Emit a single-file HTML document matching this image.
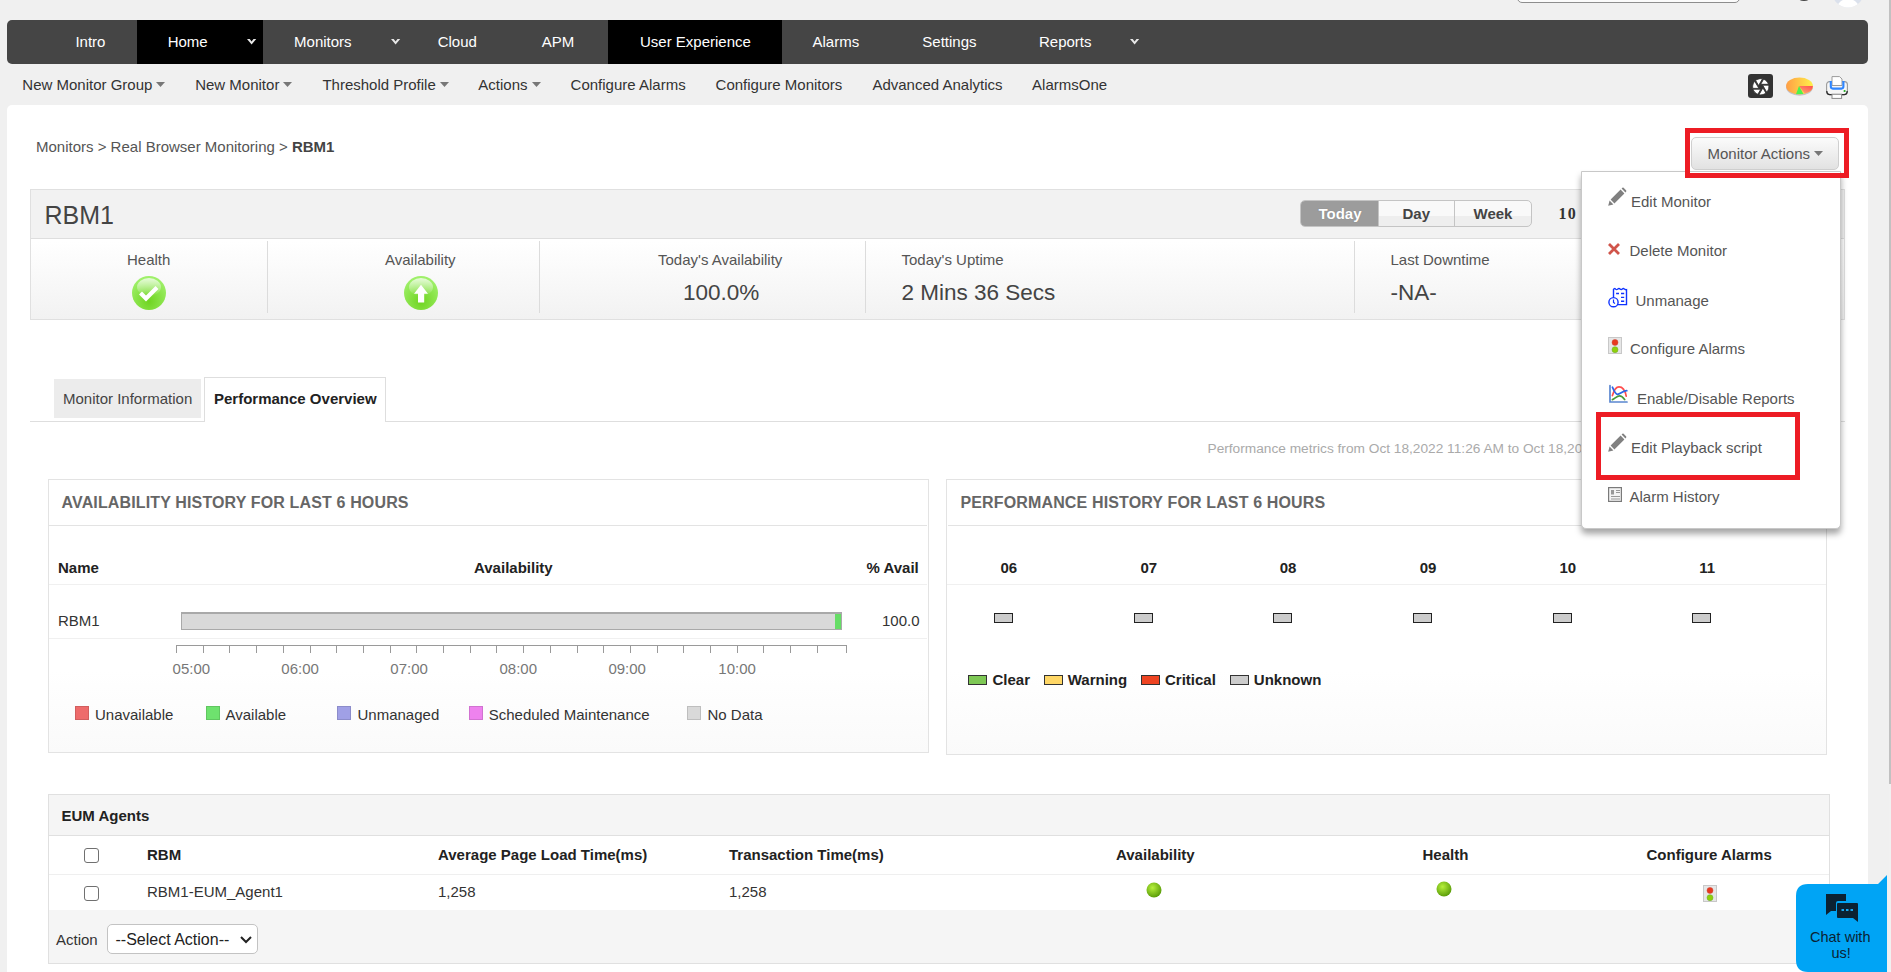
<!DOCTYPE html>
<html><head><meta charset="utf-8"><title>RBM1</title><style>
*{margin:0;padding:0;box-sizing:border-box}
html,body{width:1891px;height:972px;overflow:hidden}
body{background:#f0f0f0;font-family:"Liberation Sans", sans-serif;position:relative}
.a{position:absolute}
.t{position:absolute;white-space:nowrap;line-height:1;font-family:"Liberation Sans", sans-serif}
svg{position:absolute;overflow:visible}
</style></head><body>
<div class="a" style="left:1517px;top:-10px;width:223px;height:13px;border:1px solid #8d8d8d;border-radius:0 0 5px 5px;background:#fbfbfb"></div>
<div class="a" style="left:1799px;top:-5px;width:10px;height:6.2px;background:#4a4a4a;border-radius:45%;filter:blur(0.5px)"></div>
<svg style="left:1830px;top:-30px" width="36" height="40" viewBox="0 0 36 40"><defs><clipPath id="avc"><circle cx="18" cy="21.4" r="16"/></clipPath></defs><circle cx="18" cy="21.4" r="16" fill="#dbe1ec"/><g clip-path="url(#avc)"><ellipse cx="18" cy="38" rx="11" ry="9" fill="#fff"/><circle cx="18" cy="20" r="6" fill="#fff"/></g></svg>
<div class="a" style="left:7px;top:20px;width:1861px;height:44px;background:#454545;border-radius:5px"></div>
<div class="a" style="left:137px;top:20px;width:126px;height:44px;background:#000"></div>
<div class="a" style="left:608px;top:20px;width:174px;height:44px;background:#000"></div>
<div class="t" style="left:75.4px;top:34.30px;font-size:15px;font-weight:400;color:#fff;">Intro</div>
<div class="t" style="left:167.7px;top:34.30px;font-size:15px;font-weight:400;color:#fff;">Home</div>
<div class="t" style="left:294.1px;top:34.30px;font-size:15px;font-weight:400;color:#fff;">Monitors</div>
<div class="t" style="left:437.7px;top:34.30px;font-size:15px;font-weight:400;color:#fff;">Cloud</div>
<div class="t" style="left:541.7px;top:34.30px;font-size:15px;font-weight:400;color:#fff;">APM</div>
<div class="t" style="left:640.0px;top:34.30px;font-size:15px;font-weight:400;color:#fff;">User Experience</div>
<div class="t" style="left:812.5px;top:34.30px;font-size:15px;font-weight:400;color:#fff;">Alarms</div>
<div class="t" style="left:922.3px;top:34.30px;font-size:15px;font-weight:400;color:#fff;">Settings</div>
<div class="t" style="left:1039.0px;top:34.30px;font-size:15px;font-weight:400;color:#fff;">Reports</div>
<svg style="left:246.9px;top:38.7px" width="10" height="6" viewBox="0 0 10 6"><path d="M0 0 L2.7 0 L4.6 2.5 L6.5 0 L9.2 0 L4.6 5.6 Z" fill="#e8e8e8"/></svg>
<svg style="left:390.7px;top:38.7px" width="10" height="6" viewBox="0 0 10 6"><path d="M0 0 L2.7 0 L4.6 2.5 L6.5 0 L9.2 0 L4.6 5.6 Z" fill="#e8e8e8"/></svg>
<svg style="left:1130px;top:38.7px" width="10" height="6" viewBox="0 0 10 6"><path d="M0 0 L2.7 0 L4.6 2.5 L6.5 0 L9.2 0 L4.6 5.6 Z" fill="#e8e8e8"/></svg>
<div class="t" style="left:22.3px;top:77.10px;font-size:15px;font-weight:400;color:#333;">New Monitor Group</div>
<div class="t" style="left:195.2px;top:77.10px;font-size:15px;font-weight:400;color:#333;">New Monitor</div>
<div class="t" style="left:322.4px;top:77.10px;font-size:15px;font-weight:400;color:#333;">Threshold Profile</div>
<div class="t" style="left:478.3px;top:77.10px;font-size:15px;font-weight:400;color:#333;">Actions</div>
<div class="t" style="left:570.6px;top:77.10px;font-size:15px;font-weight:400;color:#333;">Configure Alarms</div>
<div class="t" style="left:715.6px;top:77.10px;font-size:15px;font-weight:400;color:#333;">Configure Monitors</div>
<div class="t" style="left:872.4px;top:77.10px;font-size:15px;font-weight:400;color:#333;">Advanced Analytics</div>
<div class="t" style="left:1032.1px;top:77.10px;font-size:15px;font-weight:400;color:#333;">AlarmsOne</div>
<svg style="left:156px;top:82px" width="9" height="5" viewBox="0 0 9 5"><path d="M0 0 L9 0 L4.5 5 Z" fill="#777"/></svg>
<svg style="left:283px;top:82px" width="9" height="5" viewBox="0 0 9 5"><path d="M0 0 L9 0 L4.5 5 Z" fill="#777"/></svg>
<svg style="left:439.6px;top:82px" width="9" height="5" viewBox="0 0 9 5"><path d="M0 0 L9 0 L4.5 5 Z" fill="#777"/></svg>
<svg style="left:531.6px;top:82px" width="9" height="5" viewBox="0 0 9 5"><path d="M0 0 L9 0 L4.5 5 Z" fill="#777"/></svg>
<div class="a" style="left:1748.4px;top:74.2px;width:24.4px;height:24.3px;background:#333;border-radius:3px"></div>
<svg style="left:1750.8px;top:77.2px" width="19.5" height="19.5" viewBox="0 0 24 24"><path fill="#fff" stroke="#333" stroke-width="1.1" d="M9.4 10.5l4.77-8.26C13.47 2.09 12.75 2 12 2c-2.4 0-4.6.85-6.32 2.25l3.66 6.35.06-.1zM21.54 9c-.92-2.92-3.15-5.26-6-6.34L11.88 9h9.66zm.26 1h-7.49l.29.5 4.76 8.25C21 16.97 22 14.61 22 12c0-.69-.07-1.35-.2-2zM8.54 12l-3.9-6.75C3.01 7.03 2 9.39 2 12c0 .69.07 1.35.2 2h7.49l-1.15-2zm-6.08 3c.92 2.92 3.15 5.26 6 6.34L12.12 15H2.46zm11.27 0l-3.9 6.76c.7.15 1.42.24 2.17.24 2.4 0 4.6-.85 6.32-2.25l-3.66-6.35-.93 1.6z"/></svg>
<svg style="left:1786px;top:77px" width="28" height="20" viewBox="0 0 28 20">
<defs><linearGradient id="pg" x1="0" y1="0" x2="1" y2="0"><stop offset="0" stop-color="#ff9e45"/><stop offset="1" stop-color="#fff04a"/></linearGradient>
<linearGradient id="pr" x1="1" y1="0" x2="0.3" y2="1"><stop offset="0" stop-color="#ff4f4f"/><stop offset="1" stop-color="#ffa070"/></linearGradient></defs>
<ellipse cx="13.5" cy="10.3" rx="13.4" ry="8.4" fill="#c4c0c8"/>
<ellipse cx="13.5" cy="9" rx="13.4" ry="8.4" fill="url(#pg)"/>
<path d="M13 9 L26.9 9 A13.4 8.4 0 0 1 18.8 16.6 Z" fill="url(#pr)"/>
<path d="M13 9 L10 17.3 L17.4 17 Z" fill="#4cf24c"/>
</svg>
<svg style="left:1826px;top:76px" width="23" height="23" viewBox="0 0 23 23">
<rect x="0.6" y="5.6" width="20.8" height="13" rx="3" fill="#f6f6f6" stroke="#9a9a9a" stroke-width="1.1"/>
<path d="M0.8 15 Q0.8 18.6 4 18.6 H18 Q21.2 18.6 21.2 15" stroke="#2a2a2a" stroke-width="1.3" fill="none"/>
<path d="M6 0.6 H13.5 L16 3 V9.5 H6 Z" fill="#fff" stroke="#9a9a9a" stroke-width="1"/>
<path d="M4.8 5 V10.6 Q4.8 12.6 6.8 12.6 H15.4 Q17.4 12.6 17.4 10.6 V5" stroke="#2f86ff" stroke-width="2.1" fill="none"/>
<rect x="6" y="18.2" width="9.6" height="4.2" fill="#fff" stroke="#8a8a8a" stroke-width="1"/>
<circle cx="18.6" cy="15" r="1.1" fill="#22aa22"/>
</svg>
<div class="a" style="left:7px;top:105px;width:1861px;height:900px;background:#fff;border-radius:5px"></div>
<div class="t" style="left:36.0px;top:139.10px;font-size:15px;font-weight:400;color:#555;">Monitors &gt; Real Browser Monitoring &gt; <b style="color:#444">RBM1</b></div>
<div class="a" style="left:30px;top:189px;width:1815px;height:131px;border:1px solid #e0e0e0;background:linear-gradient(#fff 0,#fff 40%,#f2f2f2 100%)"></div>
<div class="a" style="left:31px;top:190px;width:1813px;height:49px;background:#f2f2f2;border-bottom:1px solid #dedede"></div>
<div class="t" style="left:44.5px;top:202.64px;font-size:25px;font-weight:400;color:#444;">RBM1</div>
<div class="a" style="left:1300px;top:200px;width:232px;height:27px;border:1px solid #c4c4c4;border-radius:5px;overflow:hidden;background:linear-gradient(#f9f9f9 0,#f9f9f9 60%,#eeeeee 60%,#eeeeee 100%)">
<div class="a" style="left:0;top:0;width:77px;height:25px;background:#9c9c9c"></div>
<div class="a" style="left:77px;top:0;width:1px;height:25px;background:#c4c4c4"></div>
<div class="a" style="left:153px;top:0;width:1px;height:25px;background:#c4c4c4"></div>
</div>
<div class="t" style="left:1318.5px;top:206.20px;font-size:15px;font-weight:700;color:#fff;text-shadow:0 0 1px #777">Today</div>
<div class="t" style="left:1402.5px;top:206.20px;font-size:15px;font-weight:700;color:#444;">Day</div>
<div class="t" style="left:1473.5px;top:206.20px;font-size:15px;font-weight:700;color:#444;">Week</div>
<div class="t" style="left:1558.5px;top:205.66px;font-size:16px;font-weight:700;color:#333;font-family:'Liberation Serif', serif;letter-spacing:1.3px">10</div>
<div class="a" style="left:267px;top:241px;width:1px;height:72px;background:#dcdcdc"></div>
<div class="a" style="left:539px;top:241px;width:1px;height:72px;background:#dcdcdc"></div>
<div class="a" style="left:865px;top:241px;width:1px;height:72px;background:#dcdcdc"></div>
<div class="a" style="left:1354px;top:241px;width:1px;height:72px;background:#dcdcdc"></div>
<div class="t" style="left:127.0px;top:251.90px;font-size:15px;font-weight:400;color:#555;">Health</div>
<div class="t" style="left:385.0px;top:251.90px;font-size:15px;font-weight:400;color:#555;">Availability</div>
<div class="t" style="left:658.0px;top:251.90px;font-size:15px;font-weight:400;color:#555;">Today's Availability</div>
<div class="t" style="left:901.5px;top:251.90px;font-size:15px;font-weight:400;color:#555;">Today's Uptime</div>
<div class="t" style="left:1390.5px;top:251.90px;font-size:15px;font-weight:400;color:#555;">Last Downtime</div>
<div class="t" style="left:683.0px;top:282.05px;font-size:22.5px;font-weight:400;color:#444;">100.0%</div>
<div class="t" style="left:901.5px;top:282.05px;font-size:22.5px;font-weight:400;color:#444;">2 Mins 36 Secs</div>
<div class="t" style="left:1390.5px;top:282.05px;font-size:22.5px;font-weight:400;color:#444;">-NA-</div>
<svg style="left:132px;top:276px" width="34" height="34" viewBox="0 0 34 34">
<defs><radialGradient id="bg149" cx="0.5" cy="0.75" r="0.7"><stop offset="0" stop-color="#6fd421"/><stop offset="1" stop-color="#9ff06a"/></radialGradient>
<linearGradient id="hl149" x1="0" y1="0" x2="0" y2="1"><stop offset="0" stop-color="#fff" stop-opacity="0.75"/><stop offset="1" stop-color="#fff" stop-opacity="0"/></linearGradient></defs>
<circle cx="17" cy="17" r="17" fill="url(#bg149)"/>
<ellipse cx="17" cy="11" rx="12" ry="9" fill="url(#hl149)"/>
<path d="M8.5 17 L14 22.5 L25 11.5" stroke="#fff" stroke-width="4.2" fill="none"/></svg>
<svg style="left:404px;top:276px" width="34" height="34" viewBox="0 0 34 34">
<defs><radialGradient id="bg421" cx="0.5" cy="0.75" r="0.7"><stop offset="0" stop-color="#6fd421"/><stop offset="1" stop-color="#9ff06a"/></radialGradient>
<linearGradient id="hl421" x1="0" y1="0" x2="0" y2="1"><stop offset="0" stop-color="#fff" stop-opacity="0.75"/><stop offset="1" stop-color="#fff" stop-opacity="0"/></linearGradient></defs>
<circle cx="17" cy="17" r="17" fill="url(#bg421)"/>
<ellipse cx="17" cy="11" rx="12" ry="9" fill="url(#hl421)"/>
<path d="M17 8.8 L24 17.8 L20.2 17.8 L20.2 26.4 L14 26.4 L14 17.8 L10 17.8 Z" fill="#fff"/></svg>
<div class="a" style="left:30px;top:421px;width:1815px;height:1px;background:#dedede"></div>
<div class="a" style="left:54px;top:379px;width:147px;height:39px;background:#ececec"></div>
<div class="t" style="left:63.0px;top:391.40px;font-size:15px;font-weight:400;color:#444;">Monitor Information</div>
<div class="a" style="left:204px;top:377px;width:182px;height:45px;background:#fff;border:1px solid #dedede;border-bottom:none"></div>
<div class="t" style="left:214.0px;top:391.40px;font-size:15px;font-weight:700;color:#222;">Performance Overview</div>
<div class="t" style="left:1207.5px;top:442.20px;font-size:13.7px;font-weight:400;color:#aaa;">Performance metrics from Oct 18,2022 11:26 AM to Oct 18,2022 11:29 AM</div>
<div class="a" style="left:48px;top:479px;width:881px;height:274px;border:1px solid #e3e3e3;background:linear-gradient(#fff 0,#fff 70%,#fafafa 100%)"></div>
<div class="a" style="left:49px;top:525px;width:878px;height:1px;background:#e3e3e3"></div>
<div class="t" style="left:61.5px;top:495.36px;font-size:16px;font-weight:700;color:#666;letter-spacing:0.14px">AVAILABILITY HISTORY FOR LAST 6 HOURS</div>
<div class="t" style="left:58.0px;top:560.10px;font-size:15px;font-weight:700;color:#222;">Name</div>
<div class="t" style="left:474.0px;top:560.10px;font-size:15px;font-weight:700;color:#222;">Availability</div>
<div class="t" style="left:866.5px;top:560.10px;font-size:15px;font-weight:700;color:#222;">% Avail</div>
<div class="a" style="left:49px;top:584px;width:878px;height:1px;background:#f0f0f0"></div>
<div class="t" style="left:58.0px;top:612.90px;font-size:15px;font-weight:400;color:#333;">RBM1</div>
<div class="a" style="left:181px;top:612px;width:661px;height:18px;background:#d9d9d9;border:1px solid #a9a9a9;border-top-width:2px"></div>
<div class="a" style="left:835px;top:614px;width:6px;height:15px;background:#66dd66"></div>
<div class="t" style="left:882.0px;top:613.10px;font-size:15px;font-weight:400;color:#333;">100.0</div>
<div class="a" style="left:49px;top:638px;width:878px;height:1px;background:#f0f0f0"></div>
<svg style="left:0;top:0" width="1000" height="700"><g stroke="#9a9a9a" stroke-width="1" shape-rendering="crispEdges"><line x1="176" y1="645.5" x2="847" y2="645.5"/><line x1="176.5" y1="645" x2="176.5" y2="653"/><line x1="203.2" y1="645" x2="203.2" y2="653"/><line x1="229.9" y1="645" x2="229.9" y2="653"/><line x1="256.6" y1="645" x2="256.6" y2="653"/><line x1="283.3" y1="645" x2="283.3" y2="653"/><line x1="310.0" y1="645" x2="310.0" y2="653"/><line x1="336.7" y1="645" x2="336.7" y2="653"/><line x1="363.4" y1="645" x2="363.4" y2="653"/><line x1="390.1" y1="645" x2="390.1" y2="653"/><line x1="416.8" y1="645" x2="416.8" y2="653"/><line x1="443.5" y1="645" x2="443.5" y2="653"/><line x1="470.2" y1="645" x2="470.2" y2="653"/><line x1="496.9" y1="645" x2="496.9" y2="653"/><line x1="523.6" y1="645" x2="523.6" y2="653"/><line x1="550.3" y1="645" x2="550.3" y2="653"/><line x1="577.0" y1="645" x2="577.0" y2="653"/><line x1="603.7" y1="645" x2="603.7" y2="653"/><line x1="630.4" y1="645" x2="630.4" y2="653"/><line x1="657.1" y1="645" x2="657.1" y2="653"/><line x1="683.8" y1="645" x2="683.8" y2="653"/><line x1="710.5" y1="645" x2="710.5" y2="653"/><line x1="737.2" y1="645" x2="737.2" y2="653"/><line x1="763.9" y1="645" x2="763.9" y2="653"/><line x1="790.6" y1="645" x2="790.6" y2="653"/><line x1="817.3" y1="645" x2="817.3" y2="653"/><line x1="846.5" y1="645" x2="846.5" y2="653"/></g></svg>
<div class="t" style="left:172.6px;top:661.30px;font-size:15px;font-weight:400;color:#777;">05:00</div>
<div class="t" style="left:281.3px;top:661.30px;font-size:15px;font-weight:400;color:#777;">06:00</div>
<div class="t" style="left:390.3px;top:661.30px;font-size:15px;font-weight:400;color:#777;">07:00</div>
<div class="t" style="left:499.5px;top:661.30px;font-size:15px;font-weight:400;color:#777;">08:00</div>
<div class="t" style="left:608.4px;top:661.30px;font-size:15px;font-weight:400;color:#777;">09:00</div>
<div class="t" style="left:718.3px;top:661.30px;font-size:15px;font-weight:400;color:#777;">10:00</div>
<div class="a" style="left:75px;top:706px;width:14px;height:14px;background:#ee6b6b;border:1px solid rgba(0,0,0,0.12)"></div>
<div class="t" style="left:95.0px;top:707.30px;font-size:15px;font-weight:400;color:#333;">Unavailable</div>
<div class="a" style="left:206px;top:706px;width:14px;height:14px;background:#6ee26e;border:1px solid rgba(0,0,0,0.12)"></div>
<div class="t" style="left:225.5px;top:707.30px;font-size:15px;font-weight:400;color:#333;">Available</div>
<div class="a" style="left:337px;top:706px;width:14px;height:14px;background:#a0a0e6;border:1px solid rgba(0,0,0,0.12)"></div>
<div class="t" style="left:357.5px;top:707.30px;font-size:15px;font-weight:400;color:#333;">Unmanaged</div>
<div class="a" style="left:469px;top:706px;width:14px;height:14px;background:#ee82ee;border:1px solid rgba(0,0,0,0.12)"></div>
<div class="t" style="left:488.7px;top:707.30px;font-size:15px;font-weight:400;color:#333;">Scheduled Maintenance</div>
<div class="a" style="left:687px;top:706px;width:14px;height:14px;background:#d9d9d9;border:1px solid rgba(0,0,0,0.12)"></div>
<div class="t" style="left:707.5px;top:707.30px;font-size:15px;font-weight:400;color:#333;">No Data</div>
<div class="a" style="left:946px;top:479px;width:881px;height:276px;border:1px solid #e3e3e3;background:linear-gradient(#fff 0,#fff 70%,#fafafa 100%)"></div>
<div class="a" style="left:948px;top:525px;width:876px;height:1px;background:#e3e3e3"></div>
<div class="t" style="left:960.5px;top:495.36px;font-size:16px;font-weight:700;color:#666;letter-spacing:0.14px">PERFORMANCE HISTORY FOR LAST 6 HOURS</div>
<div class="t" style="left:1000.5px;top:560.20px;font-size:15px;font-weight:700;color:#222;">06</div>
<div class="a" style="left:994px;top:613px;width:19px;height:10px;background:#cccccc;border:1px solid #222"></div>
<div class="t" style="left:1140.4px;top:560.20px;font-size:15px;font-weight:700;color:#222;">07</div>
<div class="a" style="left:1134px;top:613px;width:19px;height:10px;background:#cccccc;border:1px solid #222"></div>
<div class="t" style="left:1279.7px;top:560.20px;font-size:15px;font-weight:700;color:#222;">08</div>
<div class="a" style="left:1273px;top:613px;width:19px;height:10px;background:#cccccc;border:1px solid #222"></div>
<div class="t" style="left:1419.7px;top:560.20px;font-size:15px;font-weight:700;color:#222;">09</div>
<div class="a" style="left:1413px;top:613px;width:19px;height:10px;background:#cccccc;border:1px solid #222"></div>
<div class="t" style="left:1559.4px;top:560.20px;font-size:15px;font-weight:700;color:#222;">10</div>
<div class="a" style="left:1553px;top:613px;width:19px;height:10px;background:#cccccc;border:1px solid #222"></div>
<div class="t" style="left:1699.2px;top:560.20px;font-size:15px;font-weight:700;color:#222;">11</div>
<div class="a" style="left:1692px;top:613px;width:19px;height:10px;background:#cccccc;border:1px solid #222"></div>
<div class="a" style="left:947px;top:584px;width:879px;height:1px;background:#f0f0f0"></div>
<div class="a" style="left:968px;top:675px;width:19px;height:10px;background:#7ec855;border:1px solid #333"></div>
<div class="t" style="left:992.5px;top:672.30px;font-size:15px;font-weight:700;color:#222;">Clear</div>
<div class="a" style="left:1044px;top:675px;width:19px;height:10px;background:#ffd766;border:1px solid #333"></div>
<div class="t" style="left:1067.7px;top:672.30px;font-size:15px;font-weight:700;color:#222;">Warning</div>
<div class="a" style="left:1141px;top:675px;width:19px;height:10px;background:#ee4422;border:1px solid #333"></div>
<div class="t" style="left:1165.0px;top:672.30px;font-size:15px;font-weight:700;color:#222;">Critical</div>
<div class="a" style="left:1230px;top:675px;width:19px;height:10px;background:#cccccc;border:1px solid #333"></div>
<div class="t" style="left:1253.8px;top:672.30px;font-size:15px;font-weight:700;color:#222;">Unknown</div>
<div class="a" style="left:48px;top:794px;width:1782px;height:170px;border:1px solid #e0e0e0;background:#f5f5f5"></div>
<div class="a" style="left:49px;top:835px;width:1780px;height:1px;background:#e0e0e0"></div>
<div class="a" style="left:49px;top:836px;width:1780px;height:74px;background:#fff"></div>
<div class="a" style="left:49px;top:874px;width:1780px;height:1px;background:#efefef"></div>
<div class="t" style="left:61.5px;top:808.30px;font-size:15px;font-weight:700;color:#222;">EUM Agents</div>
<div class="a" style="left:84px;top:848px;width:15px;height:15px;border:1.5px solid #707070;border-radius:3px;background:#fff"></div>
<div class="a" style="left:84px;top:886px;width:15px;height:15px;border:1.5px solid #707070;border-radius:3px;background:#fff"></div>
<div class="t" style="left:147.0px;top:846.90px;font-size:15px;font-weight:700;color:#222;">RBM</div>
<div class="t" style="left:438.0px;top:846.90px;font-size:15px;font-weight:700;color:#222;">Average Page Load Time(ms)</div>
<div class="t" style="left:729.0px;top:846.90px;font-size:15px;font-weight:700;color:#222;">Transaction Time(ms)</div>
<div class="t" style="left:1116.0px;top:846.90px;font-size:15px;font-weight:700;color:#222;">Availability</div>
<div class="t" style="left:1422.5px;top:846.90px;font-size:15px;font-weight:700;color:#222;">Health</div>
<div class="t" style="left:1646.5px;top:846.90px;font-size:15px;font-weight:700;color:#222;">Configure Alarms</div>
<div class="t" style="left:147.0px;top:884.10px;font-size:15px;font-weight:400;color:#333;">RBM1-EUM_Agent1</div>
<div class="t" style="left:438.0px;top:884.10px;font-size:15px;font-weight:400;color:#333;">1,258</div>
<div class="t" style="left:729.0px;top:884.10px;font-size:15px;font-weight:400;color:#333;">1,258</div>
<svg style="left:1145.5px;top:881.5px" width="16" height="16" viewBox="0 0 16 16"><defs><radialGradient id="d1153.5" cx="0.4" cy="0.35" r="0.65"><stop offset="0" stop-color="#b6f03c"/><stop offset="1" stop-color="#5c9e0a"/></radialGradient></defs><circle cx="8" cy="8" r="7.5" fill="url(#d1153.5)"/></svg>
<svg style="left:1435.8px;top:881.3px" width="16" height="16" viewBox="0 0 16 16"><defs><radialGradient id="d1443.8" cx="0.4" cy="0.35" r="0.65"><stop offset="0" stop-color="#b6f03c"/><stop offset="1" stop-color="#5c9e0a"/></radialGradient></defs><circle cx="8" cy="8" r="7.5" fill="url(#d1443.8)"/></svg>
<svg style="left:1703px;top:885px" width="14" height="17" viewBox="0 0 14 17"><rect x="0.5" y="0.5" width="13" height="16" fill="#e6e6e6" stroke="#c8c8c8"/><circle cx="7" cy="5.4" r="3" fill="#e8381f" stroke="#c84a3a" stroke-width="0.5"/><circle cx="7" cy="12.7" r="3" fill="#8fd00a" stroke="#6aa82a" stroke-width="0.5"/></svg>
<div class="t" style="left:56.0px;top:932.10px;font-size:15px;font-weight:400;color:#333;">Action</div>
<div class="a" style="left:107px;top:924px;width:151px;height:30px;border:1px solid #c3c3c3;border-radius:5px;background:#fff"></div>
<div class="t" style="left:115.5px;top:931.96px;font-size:16px;font-weight:400;color:#222;">--Select Action--</div>
<svg style="left:240px;top:936px" width="12" height="8" viewBox="0 0 12 8"><path d="M1 1 L6 6 L11 1" stroke="#222" stroke-width="2" fill="none"/></svg>
<div class="a" style="left:1691px;top:137px;width:148px;height:33px;border:1px solid #cfcfcf;border-radius:5px;background:linear-gradient(#fbfbfb,#e2e2e2)"></div>
<div class="t" style="left:1707.5px;top:145.80px;font-size:15px;font-weight:400;color:#555;">Monitor Actions</div>
<svg style="left:1814px;top:151px" width="9" height="5" viewBox="0 0 9 5"><path d="M0 0 L9 0 L4.5 5 Z" fill="#777"/></svg>
<div class="a" style="left:1581px;top:171px;width:260px;height:358px;background:#fff;border:1px solid #c8c8c8;border-radius:0 0 5px 5px;box-shadow:0 5px 6px rgba(0,0,0,0.35)"></div>
<div class="a" style="left:1685px;top:128px;width:164px;height:50px;border:5px solid #ed1c24"></div>
<svg style="left:1608px;top:188px" width="18" height="18" viewBox="0 0 18 18"><g fill="#808080"><path d="M0.2 17.8 L1.6 12.6 L5.4 16.4 Z"/><path d="M2.6 11.6 L12.6 1.6 L16.4 5.4 L6.4 15.4 Z"/><path d="M13.6 0.6 L14.4 -0.2 Q15 -0.6 15.6 -0.2 L18.2 2.4 Q18.6 3 18.2 3.6 L17.4 4.4 Z"/></g></svg>
<div class="t" style="left:1631.0px;top:193.50px;font-size:15px;font-weight:400;color:#555;">Edit Monitor</div>
<svg style="left:1608px;top:243px" width="12" height="12" viewBox="0 0 12 12"><path d="M1 1 L11 11 M11 1 L1 11" stroke="#d0544a" stroke-width="2.8"/></svg>
<div class="t" style="left:1629.5px;top:243.20px;font-size:15px;font-weight:400;color:#555;">Delete Monitor</div>
<svg style="left:1608px;top:287px" width="20" height="21" viewBox="0 0 20 21"><g stroke="#0f33ff" stroke-width="1.4" fill="none">
<path d="M5.5 17.6 V2.4 Q6.6 0.9 7.6 2.1 Q8.6 3.2 9.8 2.1 Q11 0.9 12.1 2.1 Q13.2 3.2 14.3 2.1 Q15.3 0.9 16.3 2.1 Q17.3 3 18.5 2.6 V17.6 Z" fill="#fff"/>
<path d="M8.1 6.5 h2.9 M13 6.5 h3.2 M13 10.4 h3.2 M13 14.3 h3.2"/>
<circle cx="5.5" cy="15.2" r="4.6" fill="#fff"/>
<path d="M5.5 12.4 v3.1 l1.5 1.1" stroke-width="1.2"/></g></svg>
<div class="t" style="left:1635.5px;top:292.90px;font-size:15px;font-weight:400;color:#555;">Unmanage</div>
<svg style="left:1608px;top:337px" width="14" height="17" viewBox="0 0 14 17"><rect x="0.5" y="0.5" width="13" height="16" fill="#e6e6e6" stroke="#c8c8c8"/><circle cx="7" cy="5.4" r="3" fill="#e8381f" stroke="#c84a3a" stroke-width="0.5"/><circle cx="7" cy="12.7" r="3" fill="#8fd00a" stroke="#6aa82a" stroke-width="0.5"/></svg>
<div class="t" style="left:1630.0px;top:341.30px;font-size:15px;font-weight:400;color:#555;">Configure Alarms</div>
<svg style="left:1609px;top:385px" width="19" height="18" viewBox="0 0 19 18"><g fill="none" stroke-width="1.7" stroke-linecap="round">
<path d="M1 0.5 V17 H18" stroke="#5a86d0"/>
<path d="M3.4 10.6 C5 5 7.5 1.9 10 1.9 C13 1.9 16 5 17.2 11.1" stroke="#ff4d4d"/>
<path d="M3.4 2.2 C5 6 6.5 9.4 8.5 9.4 C11 9.4 14 5.7 17.8 5.7" stroke="#2a66e8"/>
<path d="M3.4 14.6 C6 13.5 8 10.9 10.6 10.9 C13 10.9 14.5 13 15.7 14.6" stroke="#4a9a3a"/>
</g></svg>
<div class="t" style="left:1637.0px;top:390.80px;font-size:15px;font-weight:400;color:#555;">Enable/Disable Reports</div>
<div class="a" style="left:1596px;top:412px;width:204px;height:68px;border:5px solid #ed1c24"></div>
<svg style="left:1608px;top:434px" width="18" height="18" viewBox="0 0 18 18"><g fill="#808080"><path d="M0.2 17.8 L1.6 12.6 L5.4 16.4 Z"/><path d="M2.6 11.6 L12.6 1.6 L16.4 5.4 L6.4 15.4 Z"/><path d="M13.6 0.6 L14.4 -0.2 Q15 -0.6 15.6 -0.2 L18.2 2.4 Q18.6 3 18.2 3.6 L17.4 4.4 Z"/></g></svg>
<div class="t" style="left:1631.0px;top:439.70px;font-size:15px;font-weight:400;color:#555;">Edit Playback script</div>
<svg style="left:1608px;top:487px" width="14" height="15" viewBox="0 0 14 15"><rect x="0.6" y="0.6" width="12.8" height="13.8" fill="#f4f4f4" stroke="#7a7a7a" stroke-width="1.2"/>
<rect x="3" y="3" width="3" height="4.5" fill="#999"/><path d="M8 3.5 h4 M8 5.5 h4 M3 9.5 h9 M3 12 h9" stroke="#999" stroke-width="1"/></svg>
<div class="t" style="left:1629.5px;top:489.10px;font-size:15px;font-weight:400;color:#555;">Alarm History</div>
<svg style="left:1796px;top:874px" width="92" height="100" viewBox="0 0 92 100">
<path d="M12 10 H82 L91 1 V98 H12 Q0 98 0 86 V22 Q0 10 12 10 Z" fill="#00a4f5"/>
</svg>
<svg style="left:1825px;top:893px" width="34" height="30" viewBox="0 0 34 30">
<path d="M1 1 H21 V8 H13 Q11 8 11 10 V18 H6 L1 22 Z" fill="#0b2233"/>
<path d="M13 10 H32 Q33 10 33 11 V29 L28 25 H13 Q12 25 12 24 V11 Q12 10 13 10 Z" fill="#0b2233"/>
<path d="M16.5 17 h2.5 M21 17 h2.5 M25.5 17 h2.5" stroke="#19a6f0" stroke-width="1.8"/>
</svg>
<div class="t" style="left:1810.0px;top:929.53px;font-size:14.5px;font-weight:400;color:#0b2233;">Chat with</div>
<div class="t" style="left:1831.5px;top:946.23px;font-size:14.5px;font-weight:400;color:#0b2233;">us!</div>
<div class="a" style="left:1889px;top:0px;width:2px;height:972px;background:#f1f1f1"></div>
<div class="a" style="left:1889px;top:0px;width:2px;height:784px;background:#c1c1c1"></div>
</body></html>
